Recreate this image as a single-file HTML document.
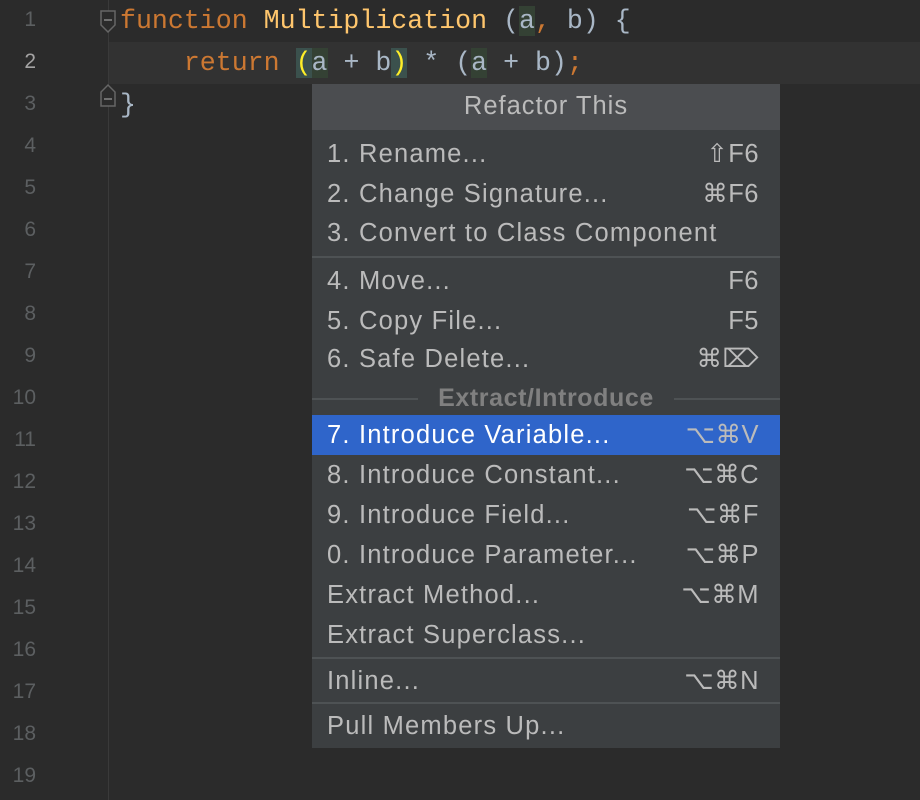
<!DOCTYPE html>
<html><head><meta charset="utf-8"><style>
body{margin:0;width:920px;height:800px;background:#2b2b2b;overflow:hidden;position:relative;font-family:"Liberation Sans",sans-serif}
.ln{position:absolute;left:0;width:36px;text-align:right;font:21px "Liberation Sans",sans-serif;color:#5c5f61;line-height:24px}
.gl{position:absolute;left:108px;top:0;width:1px;height:800px;background:#3a3a3a}
.code{position:absolute;left:120px;font:26.6px "Liberation Mono",monospace;color:#a9b7c6;white-space:pre;line-height:42px}
.k{color:#cc7832}.f{color:#ffc66d}.hl{background:#344134}.br{background:#3b514d;color:#ffef28}
.pop{position:absolute;left:312px;top:84px;width:468px;height:664px;background:#3c3f41}
.hd{position:absolute;left:0;top:0;width:468px;height:46px;background:#4b4d50;color:#bbb;font-size:25.5px;letter-spacing:1px;text-align:center;line-height:44px}
.it{position:absolute;left:0;width:468px;height:40px;line-height:40px;color:#bbb;font-size:25.5px;letter-spacing:1.2px}
.it .l{position:absolute;left:15px}.it .r{position:absolute;right:21px;color:#bbb;letter-spacing:0.5px}
.sel{background:#2f65ca}.sel .l{color:#fff}
.sep{position:absolute;left:0;width:468px;height:2px;background:#4e5254}
.grp{position:absolute;left:0;width:468px;top:297px;height:34px;text-align:center;color:#808080;font-weight:bold;font-size:25px;letter-spacing:0.6px;line-height:34px}
.grp:before,.grp:after{content:"";position:absolute;top:17px;height:2px;background:#4e5254;width:106px}
.grp:before{left:0}.grp:after{right:0}
</style></head><body>
<div style="position:absolute;left:109px;top:42px;width:811px;height:42px;background:#323232"></div>
<div class="gl"></div>
<div class="ln" style="top:8px">1</div><div class="ln" style="top:50px;color:#a4a3a3">2</div><div class="ln" style="top:92px">3</div><div class="ln" style="top:134px">4</div><div class="ln" style="top:176px">5</div><div class="ln" style="top:218px">6</div><div class="ln" style="top:260px">7</div><div class="ln" style="top:302px">8</div><div class="ln" style="top:344px">9</div><div class="ln" style="top:386px">10</div><div class="ln" style="top:428px">11</div><div class="ln" style="top:470px">12</div><div class="ln" style="top:512px">13</div><div class="ln" style="top:554px">14</div><div class="ln" style="top:596px">15</div><div class="ln" style="top:638px">16</div><div class="ln" style="top:680px">17</div><div class="ln" style="top:722px">18</div><div class="ln" style="top:764px">19</div>
<svg style="position:absolute;left:98px;top:8px" width="20" height="100" viewBox="0 0 20 100"><path d="M3 3h14v14l-7 7l-7-7z" fill="#2b2b2b" stroke="#666" stroke-width="1.5"/><path d="M6 12h8" stroke="#888" stroke-width="1.5"/><path d="M3 98h14v-14l-7-7l-7 7z" fill="#2b2b2b" stroke="#666" stroke-width="1.5"/><path d="M6 91h8" stroke="#888" stroke-width="1.5"/></svg>
<div class="code" style="top:0"><span class="k">function</span> <span class="f">Multiplication</span> (<span class="hl">a</span><span class="k">,</span> b) {</div>
<div class="code" style="top:42px">    <span class="k">return</span> <span class="br">(</span><span class="hl">a</span> + b<span class="br">)</span> * (<span class="hl">a</span> + b)<span class="k">;</span></div>
<div class="code" style="top:84px">}</div>
<div class="pop">
<div class="hd">Refactor This</div>
<div class="it" style="top:50px"><span class="l">1. Rename...</span><span class="r">⇧F6</span></div>
<div class="it" style="top:90px"><span class="l">2. Change Signature...</span><span class="r">⌘F6</span></div>
<div class="it" style="top:129px"><span class="l">3. Convert to Class Component</span></div>
<div class="sep" style="top:172px"></div>
<div class="it" style="top:177px"><span class="l">4. Move...</span><span class="r">F6</span></div>
<div class="it" style="top:217px"><span class="l">5. Copy File...</span><span class="r">F5</span></div>
<div class="it" style="top:255px"><span class="l">6. Safe Delete...</span><span class="r">⌘⌦</span></div>
<div class="grp">Extract/Introduce</div>
<div class="it sel" style="top:331px"><span class="l">7. Introduce Variable...</span><span class="r">⌥⌘V</span></div>
<div class="it" style="top:371px"><span class="l">8. Introduce Constant...</span><span class="r">⌥⌘C</span></div>
<div class="it" style="top:411px"><span class="l">9. Introduce Field...</span><span class="r">⌥⌘F</span></div>
<div class="it" style="top:451px"><span class="l">0. Introduce Parameter...</span><span class="r">⌥⌘P</span></div>
<div class="it" style="top:491px"><span class="l">Extract Method...</span><span class="r">⌥⌘M</span></div>
<div class="it" style="top:531px"><span class="l">Extract Superclass...</span></div>
<div class="sep" style="top:573px"></div>
<div class="it" style="top:577px"><span class="l">Inline...</span><span class="r">⌥⌘N</span></div>
<div class="sep" style="top:618px"></div>
<div class="it" style="top:622px"><span class="l">Pull Members Up...</span></div>
</div>
</body></html>
